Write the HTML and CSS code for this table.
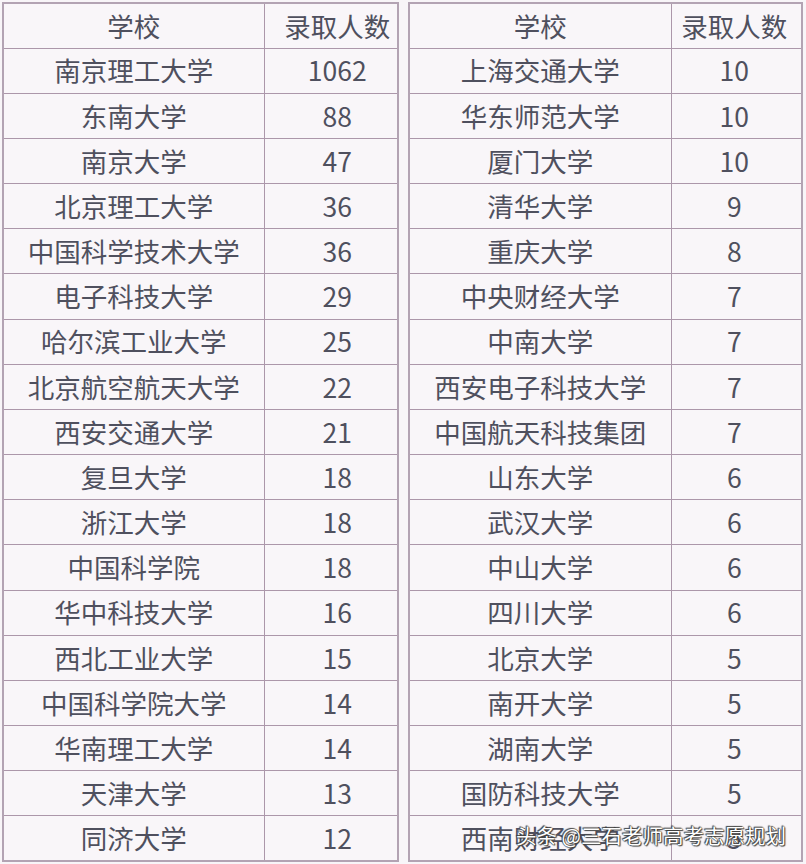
FILE: index.html
```html
<!DOCTYPE html>
<html lang="zh">
<head>
<meta charset="utf-8">
<title>录取人数</title>
<link rel="stylesheet" href="styles.css">
</head>
<body>
<div class="page">
  <table class="tbl tbl-left">
    <colgroup><col class="c-name-l"><col></colgroup>
    <thead><tr><th>学校</th><th class="num">录取人数</th></tr></thead>
    <tbody>
      <tr><td>南京理工大学</td><td class="num">1062</td></tr>
      <tr><td>东南大学</td><td class="num">88</td></tr>
      <tr><td>南京大学</td><td class="num">47</td></tr>
      <tr><td>北京理工大学</td><td class="num">36</td></tr>
      <tr><td>中国科学技术大学</td><td class="num">36</td></tr>
      <tr><td>电子科技大学</td><td class="num">29</td></tr>
      <tr><td>哈尔滨工业大学</td><td class="num">25</td></tr>
      <tr><td>北京航空航天大学</td><td class="num">22</td></tr>
      <tr><td>西安交通大学</td><td class="num">21</td></tr>
      <tr><td>复旦大学</td><td class="num">18</td></tr>
      <tr><td>浙江大学</td><td class="num">18</td></tr>
      <tr><td>中国科学院</td><td class="num">18</td></tr>
      <tr><td>华中科技大学</td><td class="num">16</td></tr>
      <tr><td>西北工业大学</td><td class="num">15</td></tr>
      <tr><td>中国科学院大学</td><td class="num">14</td></tr>
      <tr><td>华南理工大学</td><td class="num">14</td></tr>
      <tr><td>天津大学</td><td class="num">13</td></tr>
      <tr><td>同济大学</td><td class="num">12</td></tr>
    </tbody>
  </table>
  <div class="right-wrap">
    <table class="tbl tbl-right">
      <colgroup><col class="c-name-r"><col></colgroup>
      <thead><tr><th>学校</th><th class="num">录取人数</th></tr></thead>
      <tbody>
        <tr><td>上海交通大学</td><td class="num">10</td></tr>
        <tr><td>华东师范大学</td><td class="num">10</td></tr>
        <tr><td>厦门大学</td><td class="num">10</td></tr>
        <tr><td>清华大学</td><td class="num">9</td></tr>
        <tr><td>重庆大学</td><td class="num">8</td></tr>
        <tr><td>中央财经大学</td><td class="num">7</td></tr>
        <tr><td>中南大学</td><td class="num">7</td></tr>
        <tr><td>西安电子科技大学</td><td class="num">7</td></tr>
        <tr><td>中国航天科技集团</td><td class="num">7</td></tr>
        <tr><td>山东大学</td><td class="num">6</td></tr>
        <tr><td>武汉大学</td><td class="num">6</td></tr>
        <tr><td>中山大学</td><td class="num">6</td></tr>
        <tr><td>四川大学</td><td class="num">6</td></tr>
        <tr><td>北京大学</td><td class="num">5</td></tr>
        <tr><td>南开大学</td><td class="num">5</td></tr>
        <tr><td>湖南大学</td><td class="num">5</td></tr>
        <tr><td>国防科技大学</td><td class="num">5</td></tr>
        <tr><td>西南财经大学</td><td class="num">5</td></tr>
      </tbody>
    </table>
    <div class="watermark">头条 @三石老师高考志愿规划</div>
  </div>
</div>
</body>
</html>
```

FILE: styles.css
```css
html, body {
  margin: 0;
  padding: 0;
  background: #f8f5f8;
}
.page {
  display: flex;
  gap: 9px;
  padding: 2px 0 0 2px;
  font-family: "Noto Sans CJK SC", "Noto Sans", sans-serif;
  color: #4f505e;
}
.tbl {
  border-collapse: collapse;
  table-layout: fixed;
  background: #f9f6f9;
  border: 2px solid #b3a3b3;
}
.tbl tr {
  height: 45.16px;
}
.tbl-left { width: 397px; }
.tbl-right { width: 395px; }
.c-name-l { width: 261px; }
.c-name-r { width: 262px; }
.right-wrap {
  position: relative;
}
.tbl th, .tbl td {
  border: 1px solid #ac97aa;
  padding: 0;
  font-size: 26.5px;
  font-weight: normal;
  line-height: 1;
  text-align: center;
  vertical-align: middle;
  white-space: nowrap;
}
.tbl-left .num {
  padding-left: 13px;
}
.tbl-right .num {
  padding-left: 0;
  padding-right: 4px;
}
.watermark {
  position: absolute;
  left: 108px;
  top: 821px;
  font-size: 20.5px;
  line-height: 1.2;
  color: #ffffff;
  white-space: nowrap;
  text-shadow: 0 0 1px #333, 0 0 1px #333, 1px 1px 1px #444, -1px -1px 1px #444;
}
```
